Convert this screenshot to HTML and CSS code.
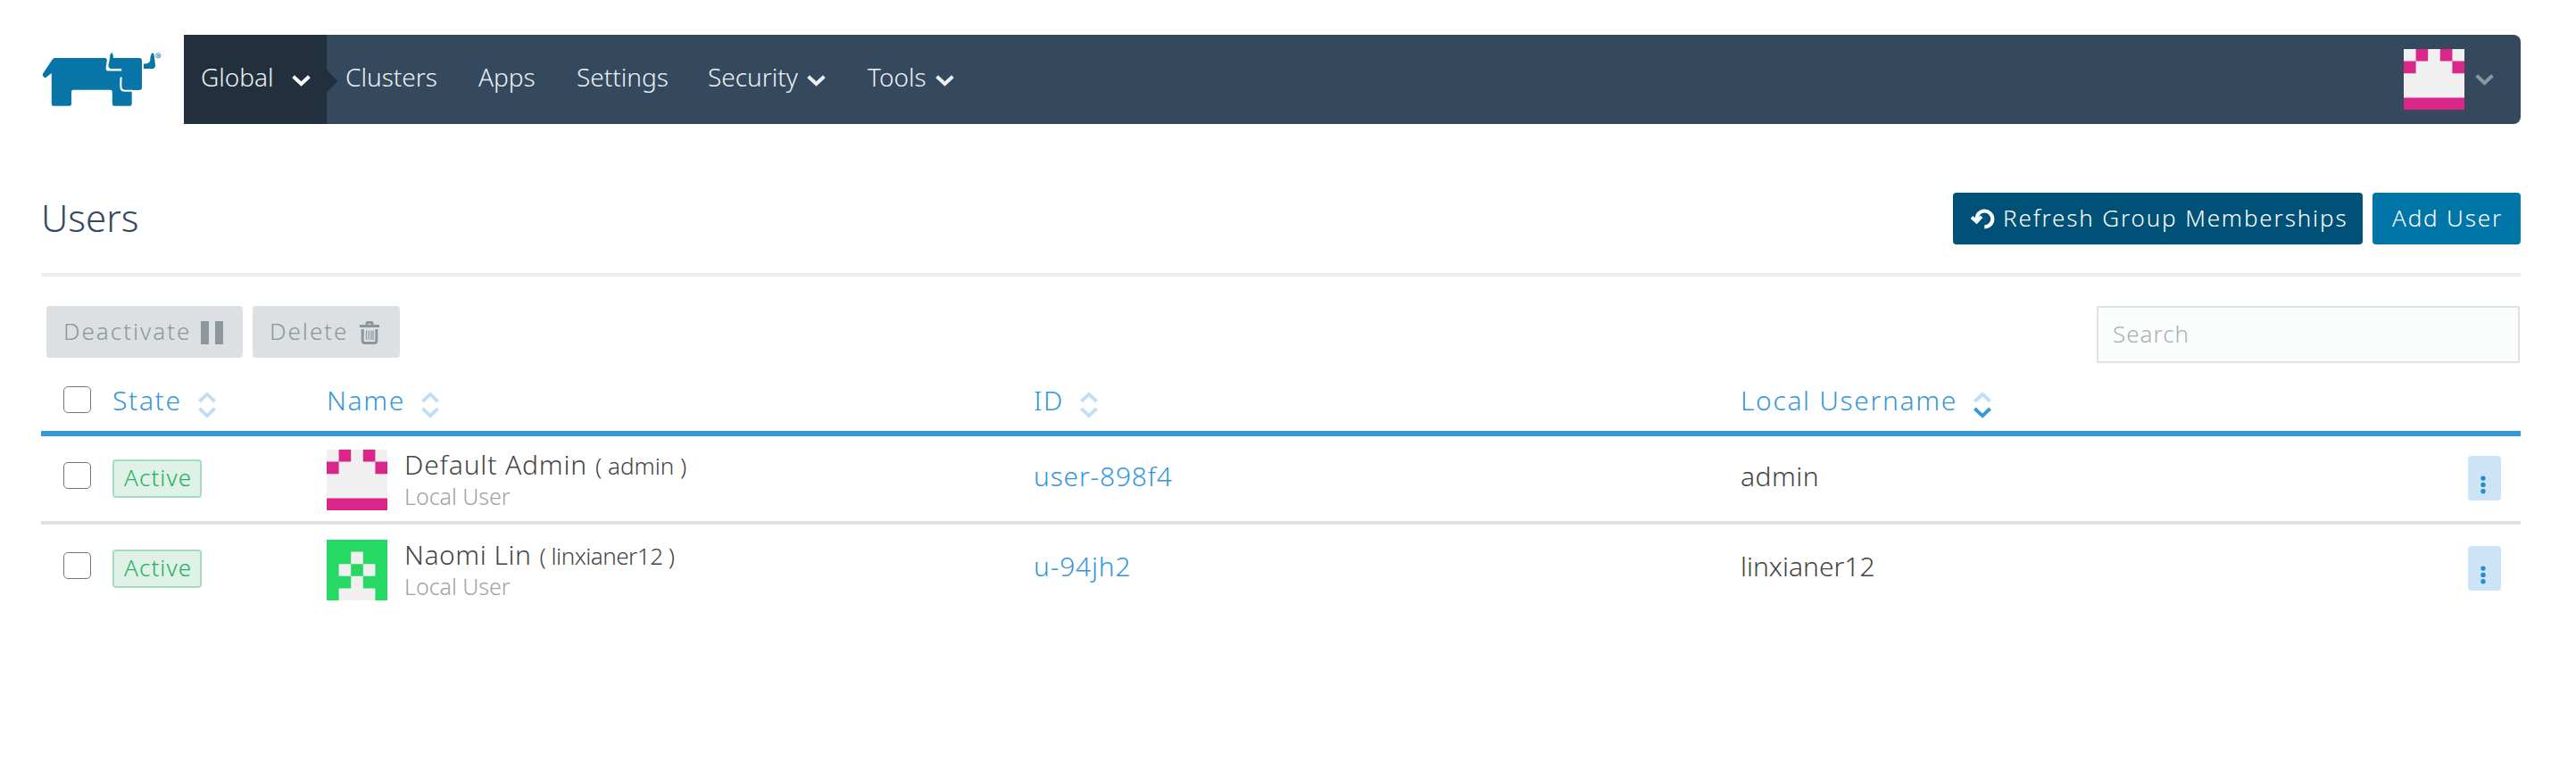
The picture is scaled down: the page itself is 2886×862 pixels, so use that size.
FILE: index.html
```
<!DOCTYPE html>
<html lang="en">
<head>
<meta charset="utf-8">
<title>Users</title>
<link rel="stylesheet" href="styles.css">
</head>
<body>
<svg class="defs" width="0" height="0">
  <symbol id="chevron" viewBox="0 0 21 13"><path d="M1.6 1.8 10.5 10 19.4 1.8" fill="none" stroke="currentColor" stroke-width="4"/></symbol>
  <symbol id="sort" viewBox="0 0 20 30">
    <path d="M1.4 11 10 2.9 18.6 11" fill="none" stroke="#c0dff4" stroke-width="3.8"/>
    <path class="sort-down" d="M1.4 19 10 27.1 18.6 19" fill="none" stroke="currentColor" stroke-width="3.8"/>
  </symbol>
  <symbol id="avatar-pink" viewBox="0 0 5 5">
    <path fill="#f0f0f0" d="M0 0h5v5H0z"/>
    <path fill="#da2688" d="M1 0h1v1H1zM3 0h1v1H3zM0 1h1v1H0zM4 1h1v1H4zM0 4h5v1H0z"/>
  </symbol>
  <symbol id="avatar-green" viewBox="0 0 5 5">
    <path fill="#26d965" d="M0 0h5v5H0z"/>
    <path fill="#f0f0f0" d="M2 1h1v1H2zM1 2h1v1H1zM3 2h1v1H3zM2 3h1v1H2zM1 4h3v1H1z"/>
  </symbol>
</svg>

<header class="header">
  <svg class="logo" viewBox="40 50 150 76">
    <g fill="#0875a9">
      <path d="M61.5 65H118q2 0 2 2l5.300-8q1.300 2 1.400 6H156q3 0 3 3V98q0 3-3 3h-8.300v15.500q0 2.200-2.200 2.200H128q-2.200 0-2.200-2.200V103q0-2.300-2.300-2.300H82.300q-2.300 0-2.300 2.300v13.500q0 2.200-2.200 2.200H60q-2.200 0-2.200-2.200V82l-6.300 4.700q-1.500.8-2.700-.7-1.800-1.800-.9-3.200L58.600 66.700Q59.800 65 61.500 65z"/>
      <path d="M161 71.400q6.500.3 7.300-3.600 0-4.800 1.300-7.300.9-1.800 2.300-.7.800 1 1 4.200l1.100 9q-.2 4-3 4H161z"/>
    </g>
    <path fill="#fff" d="M118.800 63h6l-2.300 11.500q-.5 2.500 2 2.500h11.700v2.600H121.500q-3.300 0-2.800-3.600l1.200-9q0-1.500-1.400-1.800z"/>
    <path fill="#0875a9" d="M125.300 59q1.300 1.500 1.400 6l1.300 1-.5 10h-4q-2.500-.5-2-3l1.700-9q.6-4 2.100-5z"/>
    <path fill="none" stroke="#fff" stroke-width="2.100" d="M135.700 86.500Q135.200 90 135.400 97q0 4.800 4.800 4.800H149"/>
    <circle cx="177.300" cy="62.300" r="2.700" fill="none" stroke="#0875a9" stroke-width=".7"/>
    <text x="175.900" y="63.800" class="logo-mark">R</text>
  </svg>
  <nav class="nav">
    <a class="nav-scope">Global<svg class="chev"><use href="#chevron"/></svg></a>
    <a class="nav-item clusters">Clusters</a>
    <a class="nav-item apps">Apps</a>
    <a class="nav-item settings">Settings</a>
    <a class="nav-item security">Security<svg class="chev"><use href="#chevron"/></svg></a>
    <a class="nav-item tools">Tools<svg class="chev"><use href="#chevron"/></svg></a>
    <a class="nav-user"><svg class="avatar"><use href="#avatar-pink"/></svg><svg class="chev"><use href="#chevron"/></svg></a>
  </nav>
</header>

<main class="main">
  <section class="title-bar">
    <h1 class="title">Users</h1>
    <button class="btn btn-dark"><svg class="icon-refresh" viewBox="0 0 27 24"><path d="M6.500 12A8.900 8.900 0 1 1 15.300 20.300" fill="none" stroke="#fff" stroke-width="4.200"/><path d="M1 9.500 6.500 14.500 12 8.800" fill="none" stroke="#fff" stroke-width="3.800"/></svg>Refresh Group Memberships</button>
    <button class="btn btn-blue">Add User</button>
  </section>

  <section class="toolbar">
    <button class="btn btn-off deactivate">Deactivate<svg class="icon-pause" viewBox="0 0 25 26"><path fill="currentColor" d="M0 0h9v26H0zM16 0h9v26h-9z"/></svg></button>
    <button class="btn btn-off delete">Delete<svg class="icon-trash" viewBox="0 0 22 26"><path fill="currentColor" fill-rule="evenodd" d="M0 4h6.500V2.500Q6.500 0 9 0h4q2.500 0 2.500 2.500V4H22v3H0zM9.300 4h3.400V3H9.300z"/><path d="M3.200 9v13q0 2.500 2.500 2.500h10.600q2.500 0 2.500-2.500V9" fill="none" stroke="currentColor" stroke-width="3"/><path d="M7.500 10.500V21M10.200 10.500V21M12.900 10.500V21M15 10.500V21" stroke="currentColor" stroke-width="1.200"/></svg></button>
    <input class="search" type="text" placeholder="Search">
  </section>

  <section class="table">
    <div class="row head">
      <input type="checkbox" class="check">
      <div class="th">State<svg class="sort"><use href="#sort"/></svg></div>
      <div class="th">Name<svg class="sort"><use href="#sort"/></svg></div>
      <div class="th">ID<svg class="sort"><use href="#sort"/></svg></div>
      <div class="th">Local Username<svg class="sort sorted"><use href="#sort"/></svg></div>
    </div>
    <div class="row">
      <input type="checkbox" class="check">
      <div><span class="badge">Active</span></div>
      <div class="user">
        <svg class="avatar"><use href="#avatar-pink"/></svg>
        <div class="who"><div class="name">Default Admin<span class="login">( admin )</span></div><div class="kind">Local User</div></div>
      </div>
      <a class="cell link">user-898f4</a>
      <div class="cell admin">admin</div>
      <button class="more"><svg viewBox="0 0 6 21"><circle cx="3" cy="3.100" r="2.700"/><circle cx="3" cy="10.400" r="2.700"/><circle cx="3" cy="17.700" r="2.700"/></svg></button>
    </div>
    <div class="row last">
      <input type="checkbox" class="check">
      <div><span class="badge">Active</span></div>
      <div class="user">
        <svg class="avatar"><use href="#avatar-green"/></svg>
        <div class="who"><div class="name naomi">Naomi Lin<span class="login long">( linxianer12 )</span></div><div class="kind">Local User</div></div>
      </div>
      <a class="cell link">u-94jh2</a>
      <div class="cell">linxianer12</div>
      <button class="more"><svg viewBox="0 0 6 21"><circle cx="3" cy="3.100" r="2.700"/><circle cx="3" cy="10.400" r="2.700"/><circle cx="3" cy="17.700" r="2.700"/></svg></button>
    </div>
  </section>
</main>
</body>
</html>
```
FILE: styles.css
```
* { box-sizing: border-box; }
body {
  margin: 0;
  background: #fff;
  color: #444;
  font-family: "Noto Sans", "Open Sans", sans-serif;
  font-weight: 300;
}
.defs { position: absolute; }
button, input { font: inherit; margin: 0; }
svg { display: block; flex: none; }

.header { display: flex; height: 139px; padding: 39px 62px 0 40px; }
.logo { width: 150px; height: 76px; margin: 11px 16px 0 0; }
.logo-mark { font: bold 4px "Liberation Sans", sans-serif; fill: #0875a9; }
.nav {
  flex: 1;
  display: flex;
  height: 100px;
  background: #34495e;
  border-radius: 0 8px 8px 0;
  color: #ecf0f1;
  font-size: 28px;
  line-height: 95px;
}
.nav a { display: flex; }
.chev { width: 21px; height: 13px; margin-top: 45px; }
.nav-scope {
  position: relative;
  width: 160px;
  padding-left: 19px;
  background: #22303d;
}
.nav-scope .chev { margin-left: 20px; color: #fff; }
.nav-scope::after {
  content: "";
  position: absolute;
  left: 160px;
  top: 39px;
  border: solid transparent;
  border-width: 13px 0 13px 12px;
  border-left-color: #22303d;
}
.clusters { width: 170px; padding-left: 21px; }
.apps { width: 110px; }
.settings { width: 147px; }
.security { width: 179px; }
.nav-item .chev { margin-left: 10px; }
.nav-user { margin-left: auto; padding: 16px 30px 0 0; }
.nav-user .chev { margin: 28px 0 0 12px; color: #8b979f; }
.avatar { width: 68px; height: 68px; }

.main { padding: 0 62px 0 46px; }
.title-bar {
  display: flex;
  align-items: flex-start;
  height: 171px;
  padding-top: 77px;
  border-bottom: 4px solid #ecf0f0;
}
.title {
  flex: 1;
  margin: 0;
  color: #34495e;
  font-size: 42px;
  font-weight: 300;
  line-height: 56px;
  padding-left: 0;
}
.btn {
  display: flex;
  height: 58px;
  border: 0;
  border-radius: 4px;
  color: #fff;
  font-size: 26px;
  line-height: 56px;
  letter-spacing: 1.85px;
}
.btn-dark { width: 459px; margin-right: 11px; padding: 0 0 0 20px; background: #005177; }
.btn-blue { width: 166px; padding: 0 0 0 22px; background: #0075a8; }
.btn-off { padding: 0; background: #dce0e3; color: #8c979d; letter-spacing: 2px; }
.icon-refresh { width: 27px; height: 24px; margin: 18px 9px 0 0; }

.toolbar { display: flex; align-items: flex-start; padding: 33px 1px 0 6px; height: 115px; }
.deactivate { width: 220px; margin-right: 11px; padding-left: 19px; }
.delete { width: 165px; padding-left: 19px; }
.icon-pause { width: 25px; height: 26px; margin: 17px 0 0 11px; }
.icon-trash { width: 22px; height: 26px; margin: 17px 0 0 13px; }
.search {
  width: 474px;
  height: 64px;
  margin-left: auto;
  padding: 0 16px 2px;
  border: 2px solid #dce4e6;
  border-radius: 0;
  background: #fbfdfd;
  font-size: 26px;
  letter-spacing: 1px;
}
.search::placeholder { color: #a8b0b4; opacity: 1; }

.row {
  display: grid;
  grid-template-columns: 80px 240px 792px 792px 815px 37px;
  align-items: start;
  height: 99px;
  border-bottom: 4px solid #dfe0e1;
}
.row > * { margin-top: 15px; }
.head { height: 64px; border-bottom: 6px solid #3497db; }
.last { padding-top: 2px; border-bottom: 0; }
.row > .check {
  appearance: none;
  width: 31px;
  height: 30px;
  margin: 29px 0 0 25px;
  border: 1px solid #767676;
  border-radius: 5px;
  background: #fff;
}
.head > .check { margin-top: 8px; }
.head > .th {
  display: flex;
  margin-top: 3px;
  color: #3497db;
  font-size: 30px;
  line-height: 42px;
  letter-spacing: 1.65px;
}
.sort { width: 20px; height: 30px; margin: 11px 0 0 18px; color: #c0dff4; }
.sorted { color: #3497db; }
.badge {
  display: block;
  width: 100px;
  height: 43px;
  margin-top: 11px;
  padding-left: 11px;
  border: 2px solid #a5dcbd;
  border-radius: 4px;
  background: #dff2e7;
  color: #27ae60;
  font-size: 26px;
  line-height: 37px;
  letter-spacing: 1.1px;
}
.user { display: flex; }
.who { margin-left: 19px; }
.name { display: flex; align-items: baseline; font-size: 30px; line-height: 40px; letter-spacing: .85px; }
.name { margin-top: -3px; }
.naomi { letter-spacing: .55px; }
.login { margin-left: 9px; font-size: 26px; letter-spacing: 0; }
.long { letter-spacing: -.5px; }
.kind { margin-top: -3px; color: #a0a0a0; font-size: 25px; line-height: 34px; }
.cell { font-size: 30px; line-height: 60px; }
.admin { letter-spacing: .5px; }
.link { color: #3497db; letter-spacing: .8px; }
.row > .more {
  width: 37px;
  height: 50px;
  margin-top: 22px;
  padding: 14px 0 0 14px;
  border: 0;
  border-radius: 4px;
  background: #cce4f6;
}
.more svg { width: 6px; height: 21px; fill: #258cd4; }
```
